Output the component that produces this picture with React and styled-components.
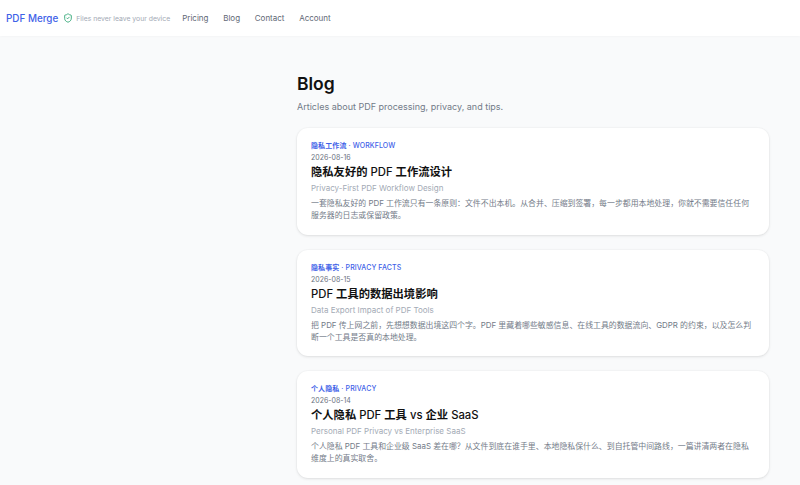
import React from "react";
import styled, { createGlobalStyle } from "styled-components";
import { ShieldCheck } from "lucide-react";

const GlobalStyle = createGlobalStyle`
  html, body {
    margin: 0;
    height: 100%;
    overflow: hidden;
    background: #f9fafb;
    font-family: Inter, "Noto Sans CJK SC", sans-serif;
  }
`;

const Header = styled.header`
  height: 36px;
  box-sizing: border-box;
  display: flex;
  align-items: center;
  padding-left: 6px;
  background: #fff;
  box-shadow: 0 1px 2px rgba(0, 0, 0, 0.025);
`;

const Logo = styled.a`
  font-size: 9.9px;
  font-weight: 500;
  color: #3f62e8;
`;

const Tagline = styled.div`
  display: flex;
  align-items: center;
  gap: 3px;
  margin-left: 5px;
  font-size: 6.85px;
  color: #a3aab5;
  svg {
    color: #22a06b;
  }
`;

const Nav = styled.nav`
  display: flex;
  gap: 14.7px;
  margin-left: 12px;
`;

const NavLink = styled.a`
  font-size: 8px;
  font-weight: 400;
  color: #5f6875;
`;

const Main = styled.main`
  width: 471.5px;
  margin-left: 297px;
  padding-top: 37px;
`;

const Title = styled.h1`
  margin: 0;
  font-size: 17.5px;
  line-height: 21px;
  font-weight: 600;
  color: #111;
`;

const Subtitle = styled.p`
  margin: 6px 0 14px;
  font-size: 9px;
  line-height: 14px;
  color: #737b88;
`;

const List = styled.div`
  display: flex;
  flex-direction: column;
  gap: 15px;
`;

const Card = styled.article`
  box-sizing: border-box;
  height: 106.5px;
  padding: 13px 14px;
  background: #fff;
  border-radius: 11px;
  box-shadow: 0 1px 3px rgba(0, 0, 0, 0.1), 0 0 0 1px rgba(0, 0, 0, 0.015);
`;

const Category = styled.div`
  font-size: 7px;
  line-height: 9px;
  font-weight: 500;
  letter-spacing: 0.1px;
  color: #3f62e8;
`;

const PostDate = styled.div`
  margin-top: 3px;
  font-size: 7px;
  line-height: 9px;
  color: #6b7280;
`;

const CardTitle = styled.h2`
  margin: 2px 0 0;
  font-size: 11.3px;
  line-height: 16px;
  font-weight: 500;
  color: #111;
`;

// the Chinese runs are heavier than the Latin ones next to them
const Han = styled.span`
  font-weight: 700;
`;

const CardSub = styled.div`
  margin-top: 2px;
  font-size: 8px;
  line-height: 12px;
  color: #a3aab5;
`;

const Excerpt = styled.p`
  margin: 3px 0 0;
  font-size: 7.9px;
  line-height: 12px;
  color: #737b88;
`;

const posts = [
  {
    category: "隐私工作流 · WORKFLOW",
    date: "2026-08-16",
    title: "隐私友好的 PDF 工作流设计",
    sub: "Privacy-First PDF Workflow Design",
    excerpt:
      "一套隐私友好的 PDF 工作流只有一条原则：文件不出本机。从合并、压缩到签署，每一步都用本地处理，你就不需要信任任何服务器的日志或保留政策。",
  },
  {
    category: "隐私事实 · PRIVACY FACTS",
    date: "2026-08-15",
    title: "PDF 工具的数据出境影响",
    sub: "Data Export Impact of PDF Tools",
    excerpt:
      "把 PDF 传上网之前，先想想数据出境这四个字。PDF 里藏着哪些敏感信息、在线工具的数据流向、GDPR 的约束，以及怎么判断一个工具是否真的本地处理。",
  },
  {
    category: "个人隐私 · PRIVACY",
    date: "2026-08-14",
    title: "个人隐私 PDF 工具 vs 企业 SaaS",
    sub: "Personal PDF Privacy vs Enterprise SaaS",
    excerpt:
      "个人隐私 PDF 工具和企业级 SaaS 差在哪？从文件到底在谁手里、本地隐私保什么、到自托管中间路线，一篇讲清两者在隐私维度上的真实取舍。",
  },
];

const withHan = (text) =>
  text
    .split(/([\u4e00-\u9fff]+)/)
    .map((part, i) => (i % 2 ? <Han key={i}>{part}</Han> : part));

export default function App() {
  return (
    <>
      <GlobalStyle />
      <Header>
        <Logo>PDF Merge</Logo>
        <Tagline>
          <ShieldCheck size={10} />
          Files never leave your device
        </Tagline>
        <Nav>
          <NavLink>Pricing</NavLink>
          <NavLink>Blog</NavLink>
          <NavLink>Contact</NavLink>
          <NavLink>Account</NavLink>
        </Nav>
      </Header>
      <Main>
        <Title>Blog</Title>
        <Subtitle>Articles about PDF processing, privacy, and tips.</Subtitle>
        <List>
          {posts.map((p) => (
            <Card key={p.date}>
              <Category>{withHan(p.category)}</Category>
              <PostDate>{p.date}</PostDate>
              <CardTitle>{withHan(p.title)}</CardTitle>
              <CardSub>{p.sub}</CardSub>
              <Excerpt>{p.excerpt}</Excerpt>
            </Card>
          ))}
        </List>
      </Main>
    </>
  );
}
